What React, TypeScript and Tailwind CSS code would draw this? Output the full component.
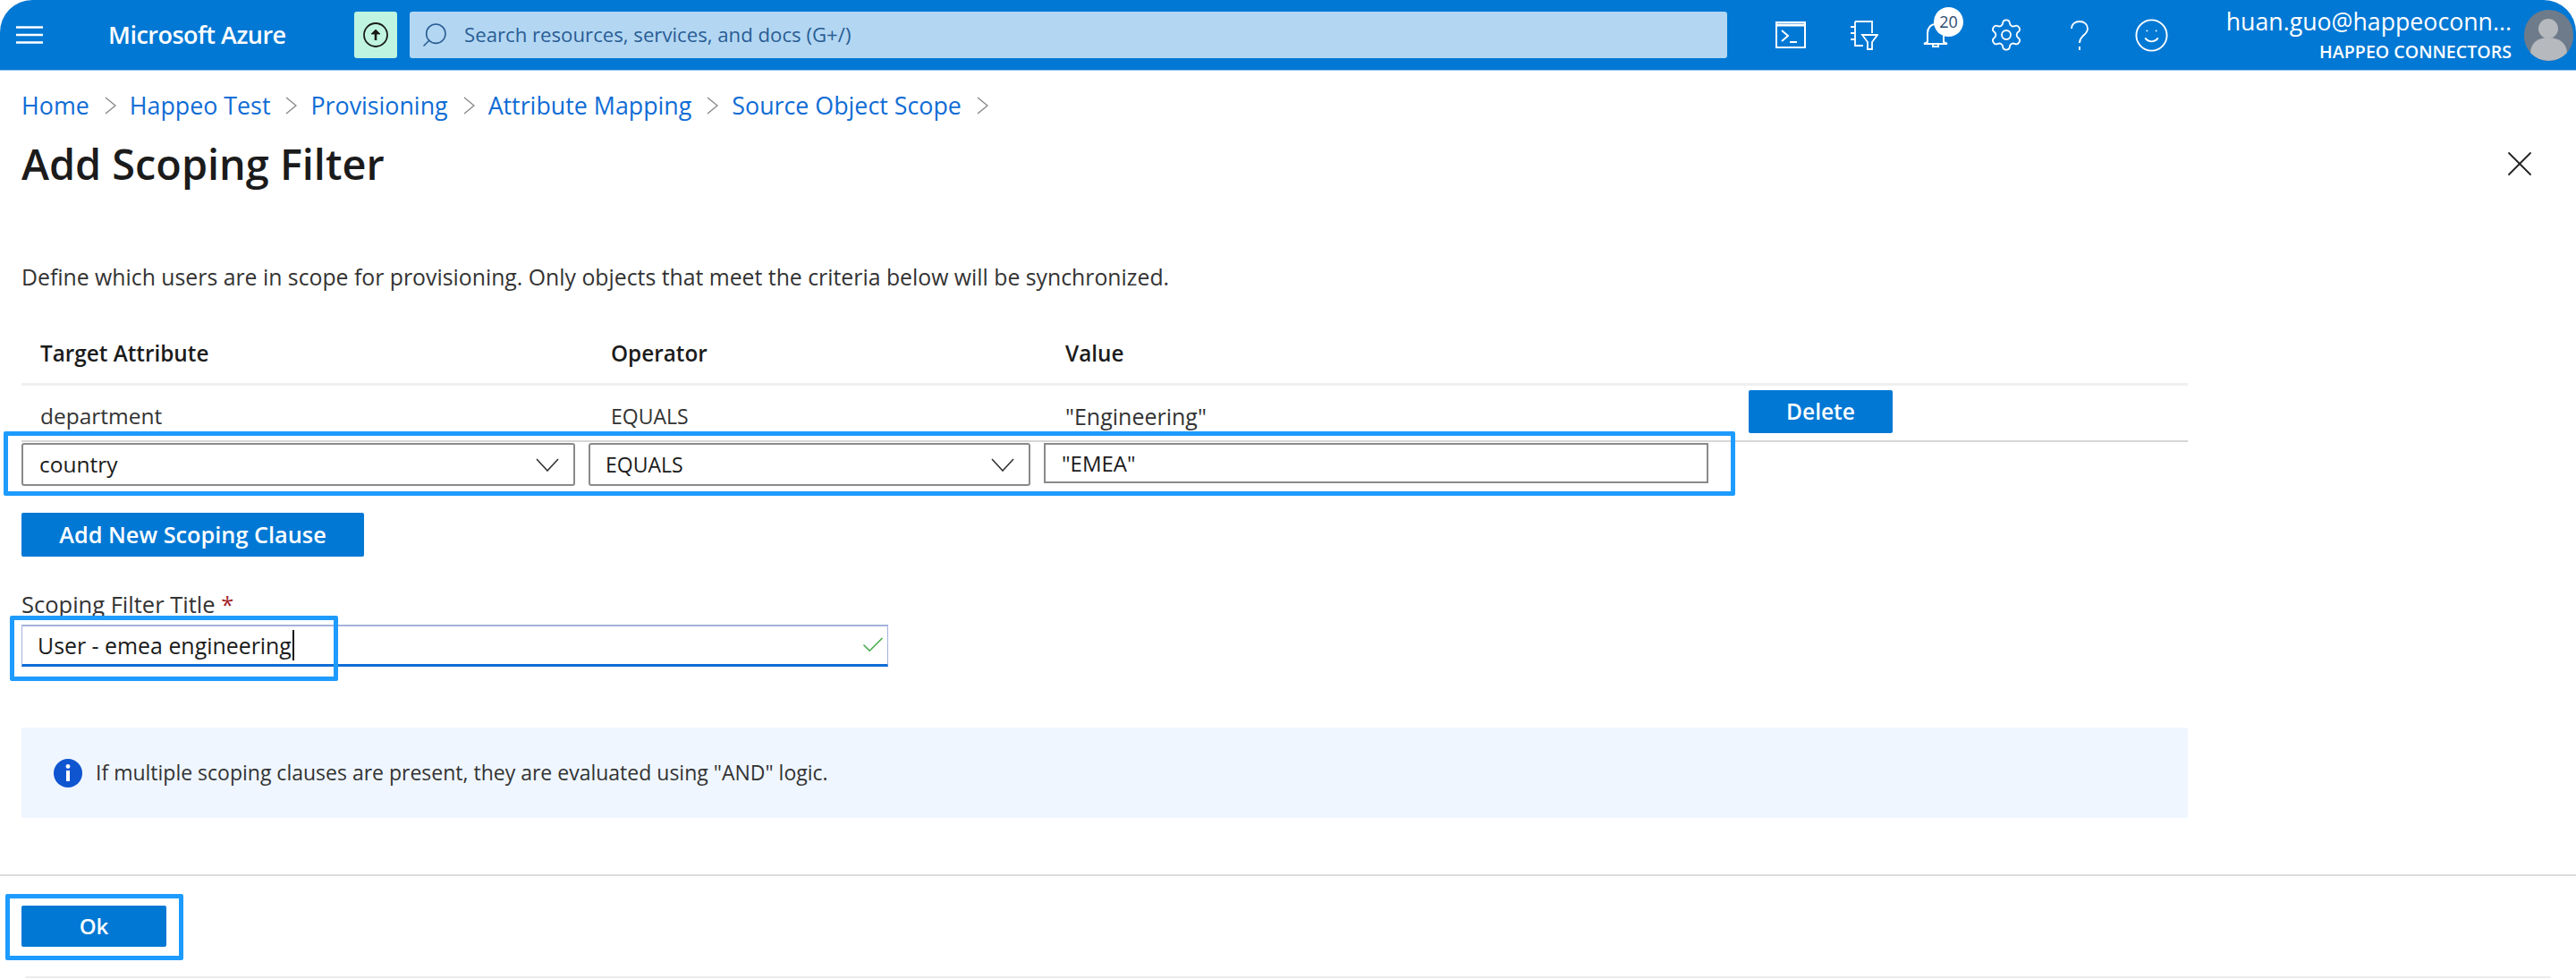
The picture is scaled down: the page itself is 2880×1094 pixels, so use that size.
import { Check, Search, Settings, Smile, X } from "lucide-react";

const crumbs = ["Home", "Happeo Test", "Provisioning", "Attribute Mapping", "Source Object Scope"];

// blue annotation frame drawn over a control in the screenshot
function Highlight({ className }: { className: string }) {
  return <div className={`absolute border-[5px] border-[#1e9bff] rounded-[2px] pointer-events-none ${className}`} />;
}

function MenuIcon() {
  return (
    <svg viewBox="0 0 30 20" className="w-[30px] h-[20px]" fill="none" stroke="currentColor" strokeWidth="2.4">
      <path d="M0 1.5h30M0 10h30M0 18.5h30" />
    </svg>
  );
}

function TerminalIcon() {
  return (
    <svg viewBox="0 0 34 30" className="w-[34px] h-[30px]" fill="none" stroke="currentColor" strokeWidth="2">
      <rect x="1" y="1" width="32" height="28" />
      <path d="M1 4h32" strokeWidth="3" />
      <path d="M7 10l7 6-7 6M16 23h8" />
    </svg>
  );
}

function DirectoryFilterIcon() {
  return (
    <svg viewBox="0 0 33 33" className="w-[33px] h-[33px]" fill="none" stroke="currentColor" strokeWidth="1.8">
      <path d="M7 1h19v13M7 1v27h9" />
      <path d="M2 7h5M2 14h5M2 21h5" />
      <path d="M15 16h17l-6 8v8h-5v-8z" />
    </svg>
  );
}

function BellIcon() {
  return (
    <svg viewBox="0 0 28 28" className="w-[28px] h-[28px]" fill="none" stroke="currentColor" strokeWidth="2">
      <path d="M5 22V12C5 6 9 2 14 2s9 4 9 10v10l4 2H1z" />
      <path d="M11 24v3h6v-3" />
    </svg>
  );
}

function HelpIcon() {
  return (
    <svg viewBox="0 0 20 33" className="w-[20px] h-[33px]" fill="none" stroke="currentColor" strokeWidth="1.8">
      <path d="M1 9C1 4 5 1 10 1s9 3 9 8c0 4-3 6-5 8s-4 3-4 8" />
      <path d="M10 29v4" />
    </svg>
  );
}

function DropdownChevron() {
  return (
    <svg viewBox="0 0 26 15" className="w-[26px] h-[15px] text-[#333]" fill="none" stroke="currentColor" strokeWidth="1.6">
      <path d="M1 1l12 13L25 1" />
    </svg>
  );
}

function CrumbChevron() {
  return (
    <svg viewBox="0 0 13 20" className="ml-[17px] mr-[15px] w-[13px] h-[20px] text-[#888]" fill="none" stroke="currentColor" strokeWidth="1.4">
      <path d="M1 1l11 9-11 9" />
    </svg>
  );
}

function UpgradeIcon() {
  return (
    <svg viewBox="0 0 28 28" className="w-[28px] h-[28px]" fill="none" stroke="#1b1b1b" strokeWidth="1.8">
      <circle cx="14" cy="14" r="13" />
      <path d="M14 20v-8" strokeWidth="2.6" />
      <path d="M9 13l5-5 5 5z" fill="#1b1b1b" strokeWidth="0.8" />
    </svg>
  );
}

function AvatarIcon() {
  return (
    <svg viewBox="0 0 55 57" className="w-[55px] h-[57px] rounded-full bg-[#6e7b8b]">
      <circle cx="27" cy="21" r="11" fill="#b6b9bd" />
      <path d="M7 49c0-12 8-18 20-18s21 6 21 18c-5 5-13 8-21 8S12 54 7 49z" fill="#b6b9bd" />
    </svg>
  );
}

function InfoIcon() {
  return (
    <svg viewBox="0 0 32 32" className="w-[32px] h-[32px] shrink-0">
      <circle cx="16" cy="16" r="16" fill="#0f55d0" />
      <circle cx="16" cy="8.5" r="2.4" fill="#fff" />
      <rect x="14" y="13" width="4" height="12" fill="#fff" />
    </svg>
  );
}

export default function App() {
  return (
    <div className="w-[2880px] h-[1094px] bg-white overflow-hidden font-['Open_Sans',sans-serif] text-[#1b1b1b] flex flex-col">
      {/* Top bar */}
      <header className="h-[79px] shrink-0 bg-[#0078d4] border-b border-[#8fc2ea] rounded-t-[36px] flex items-center text-white">
        <div className="ml-[18px]"><MenuIcon /></div>
        <span className="ml-[73px] w-[275px] text-[27px] font-semibold tracking-[-0.5px]">Microsoft Azure</span>
        <div className="w-[48px] h-[52px] bg-[#bff5e0] rounded-[3px] flex items-center justify-center">
          <UpgradeIcon />
        </div>
        <div className="ml-[14px] w-[1473px] h-[52px] bg-[#b3d7f2] rounded-[3px] flex items-center pl-[12px] text-[#2a5d95]">
          <Search className="w-[32px] h-[32px] -scale-x-100" strokeWidth={1.2} />
          <span className="ml-[17px] text-[22.2px]">Search resources, services, and docs (G+/)</span>
        </div>
        <div className="ml-[54px]"><TerminalIcon /></div>
        <div className="ml-[48px]"><DirectoryFilterIcon /></div>
        <div className="ml-[50px] w-[28px] relative">
          <BellIcon />
          <span className="absolute left-[12px] -top-[17px] w-[33px] h-[33px] rounded-full bg-white text-[#2c4a70] text-[18px] flex items-center justify-center">20</span>
        </div>
        <Settings className="ml-[45px] w-[40px] h-[40px]" strokeWidth={1.1} />
        <div className="ml-[52px]"><HelpIcon /></div>
        <Smile className="ml-[50px] w-[41px] h-[41px]" strokeWidth={1.1} />
        <div className="ml-[60px] w-[322px] self-start mt-[9px] flex flex-col items-end gap-[8px]">
          <span className="text-[26.7px] leading-[30px] whitespace-nowrap">huan.guo@happeoconn...</span>
          <span className="text-[19.6px] leading-[22px] font-semibold whitespace-nowrap">HAPPEO CONNECTORS</span>
        </div>
        <div className="ml-[14px]"><AvatarIcon /></div>
      </header>

      {/* Blade */}
      <main className="flex-1 flex flex-col">
        <div className="px-[24px]">
          <nav className="mt-[22px] h-[34px] flex items-center text-[26.8px] text-[#0f6cd5]">
            {crumbs.map((c) => (
              <span key={c} className="flex items-center">
                {c}
                <CrumbChevron />
              </span>
            ))}
          </nav>
          <div className="mt-[20px] flex items-center justify-between">
            <h1 className="text-[46.8px] leading-[56px] font-semibold">Add Scoping Filter</h1>
            <X className="mr-[15px] w-[48px] h-[48px] text-[#222]" strokeWidth={0.9} />
          </div>
          <p className="mt-[81px] text-[24.8px] leading-[34px] text-[#333]">
            Define which users are in scope for provisioning. Only objects that meet the criteria below will be synchronized.
          </p>

          {/* Clause table */}
          <div className="mt-[54px] w-[2422px] text-[24.5px]">
            <div className="h-[51px] border-b-[3px] border-[#f0f0f0] flex items-start text-[24.3px] font-semibold leading-[30px]">
              <span className="ml-[21px] w-[638px]">Target Attribute</span>
              <span className="w-[508px]">Operator</span>
              <span>Value</span>
            </div>
            <div className="h-[63px] border-b-2 border-[#d6d6d6] flex items-start text-[#333]">
              <span className="ml-[21px] w-[638px] mt-[18px] leading-[32px]">department</span>
              <span className="w-[508px] mt-[18px] leading-[32px] text-[23px]">EQUALS</span>
              <span className="w-[764px] mt-[18px] leading-[32px] text-[25px]">"Engineering"</span>
              <button className="mt-[5px] w-[161px] h-[48px] bg-[#0078d4] text-white font-semibold rounded-[2px]">Delete</button>
            </div>
            <div className="relative mt-[1px] flex items-start gap-[15px] w-[1886px]">
              <Highlight className="-left-[20px] -top-[13px] w-[1936px] h-[72px]" />
              <div className="w-[619px] h-[48px] border-2 border-[#8a8a8a] rounded-[3px] pl-[18px] pr-[16px] flex items-center justify-between bg-white">
                country
                <DropdownChevron />
              </div>
              <div className="w-[494px] h-[48px] border-2 border-[#8a8a8a] rounded-[3px] pl-[17px] pr-[16px] flex items-center justify-between bg-white text-[23px]">
                EQUALS
                <DropdownChevron />
              </div>
              <div className="w-[743px] h-[45px] border-2 border-[#8a8a8a] pl-[18px] flex items-center bg-white text-[24px]">"EMEA"</div>
            </div>
          </div>

          <button className="mt-[30px] w-[383px] h-[49px] block bg-[#0078d4] text-white text-[25.3px] font-semibold rounded-[2px]">Add New Scoping Clause</button>

          <label className="mt-[37px] block text-[25.5px] leading-[32px] text-[#333]">
            Scoping Filter Title <span className="text-[#a4262c]">*</span>
          </label>
          <div className="relative mt-[7px] w-[969px] h-[47px] border border-[#a3b3dd] border-t-2 border-b-[3px] border-b-[#0f6cd5] pl-[17px] pr-[1px] flex items-center justify-between text-[24.9px]">
            <Highlight className="-left-[14px] -top-[12px] w-[367px] h-[73px]" />
            <span className="border-r-2 border-[#111] leading-[34px] pr-[1px]">User - emea engineering</span>
            <Check className="w-[30px] h-[30px] text-[#4caf50]" strokeWidth={1.4} />
          </div>

          <div className="mt-[68px] w-[2422px] h-[101px] bg-[#eff6ff] rounded-[2px] flex items-center pl-[36px] gap-[15px] text-[23px] text-[#333]">
            <InfoIcon />
            If multiple scoping clauses are present, they are evaluated using "AND" logic.
          </div>
        </div>

        {/* Footer */}
        <div className="mt-[63px] border-t-2 border-[#dcdcdc] px-[24px] pt-[33px]">
          <div className="relative w-[162px]">
            <Highlight className="-left-[18px] -top-[13px] w-[199px] h-[74px]" />
            <button className="w-[162px] h-[46px] block bg-[#0078d4] text-white text-[24px] font-semibold rounded-[2px]">Ok</button>
          </div>
        </div>
        <div className="mt-[33px] mx-[28px] border-t-2 border-[#ececec] rounded-full" />
      </main>
    </div>
  );
}
